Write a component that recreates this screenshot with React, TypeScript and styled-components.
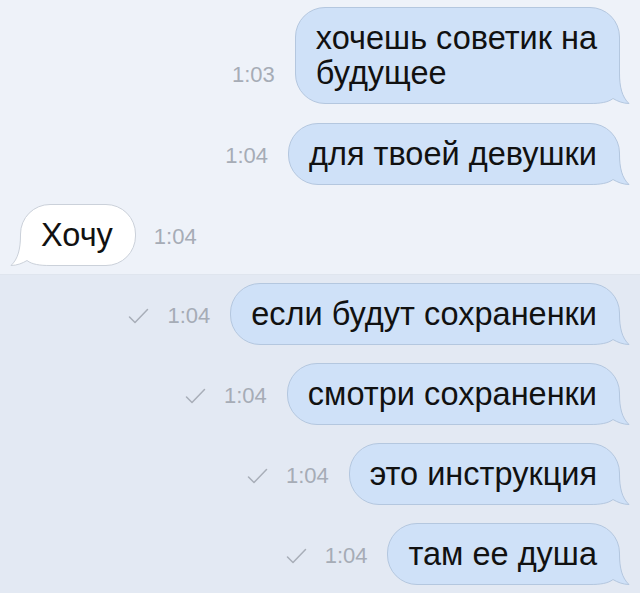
import styled, { createGlobalStyle } from "styled-components";

const GlobalStyle = createGlobalStyle`
  html, body {
    margin: 0;
    padding: 0;
    background: #eef2f9;
  }
  body {
    font-family: "Liberation Sans", Arial, sans-serif;
    -webkit-font-smoothing: antialiased;
  }
`;

const Screen = styled.div`
  width: 640px;
  height: 593px;
  overflow: hidden;
  display: flex;
  flex-direction: column;
  background: #e3e9f3;
`;

const ReadArea = styled.div`
  display: flex;
  flex-direction: column;
  gap: 19px;
  padding: 7px 0 8px;
  background: #eef2f9;
  border-bottom: 1px solid #dfe5ee;
`;

const UnreadArea = styled.div`
  display: flex;
  flex-direction: column;
  gap: 18px;
  padding: 8px 0 0;
`;

const Row = styled.div<{ $out?: boolean }>`
  display: flex;
  align-items: flex-end;
  justify-content: ${(p) => (p.$out ? "flex-end" : "flex-start")};
  padding: ${(p) => (p.$out ? "0 20px 0 0" : "0 0 0 20px")};
`;

const Meta = styled.div<{ $out?: boolean }>`
  display: flex;
  align-items: center;
  gap: 18px;
  height: 58px;
  margin: ${(p) => (p.$out ? "0 20px 0 0" : "0 0 0 18px")};
  font-size: 22px;
  color: #a6acb6;
`;

const Bubble = styled.div<{ $out?: boolean }>`
  position: relative;
  padding: 13px 22px 12px 20px;
  line-height: 35px;
  font-size: 32.5px;
  color: #111;
  border-radius: 30px;
  background: ${(p) => (p.$out ? "#cfe1f8" : "#ffffff")};
  border: 1px solid ${(p) => (p.$out ? "#b4c7df" : "#cbd1da")};
`;

const Text = styled.span`
  position: relative;
  z-index: 1;
`;

const Tail = styled.svg<{ $out?: boolean }>`
  position: absolute;
  bottom: -1px;
  width: 40px;
  height: 31px;
  ${(p) => (p.$out ? "right: -11px;" : "left: -11px; transform: scaleX(-1);")}
`;

function BubbleTail({ out }: { out?: boolean }) {
  const fill = out ? "#cfe1f8" : "#ffffff";
  const stroke = out ? "#b4c7df" : "#cbd1da";
  return (
    <Tail $out={out} viewBox="0 0 40 31">
      <path
        d="M0 30.5 L0 0 L29.5 0 C29.5 14 32 24 39 30.5 C33 30.5 27 28 23 25.5 C18 29.5 10 30.5 0 30.5 Z"
        fill={fill}
      />
      <path
        d="M29.5 0 C29.5 14 32 24 39 30.5 C33 30.5 27 28 23 25.5 C18 29.5 10 30.5 0 30.5"
        fill="none"
        stroke={stroke}
        strokeWidth="1"
      />
    </Tail>
  );
}

const Check = () => (
  <svg width="21" height="16" viewBox="0 0 21 16">
    <path
      d="M1.5 9 L7 14.5 L19.5 1.5"
      fill="none"
      stroke="#a8aeb8"
      strokeWidth="1.5"
      strokeLinecap="round"
      strokeLinejoin="round"
    />
  </svg>
);

type Msg = { text: React.ReactNode; time: string; out?: boolean; sent?: boolean };

function Message({ text, time, out, sent }: Msg) {
  const meta = (
    <Meta $out={out}>
      {sent && <Check />}
      <span>{time}</span>
    </Meta>
  );
  return (
    <Row $out={out}>
      {out && meta}
      <Bubble $out={out}>
        <Text>{text}</Text>
        <BubbleTail out={out} />
      </Bubble>
      {!out && meta}
    </Row>
  );
}

export default function App() {
  return (
    <>
      <GlobalStyle />
      <Screen>
        <ReadArea>
          <Message
            out
            time="1:03"
            text={
              <>
                хочешь советик на
                <br />
                будущее
              </>
            }
          />
          <Message out time="1:04" text="для твоей девушки" />
          <Message time="1:04" text="Хочу" />
        </ReadArea>
        <UnreadArea>
          <Message out sent time="1:04" text="если будут сохраненки" />
          <Message out sent time="1:04" text="смотри сохраненки" />
          <Message out sent time="1:04" text="это инструкция" />
          <Message out sent time="1:04" text="там ее душа" />
        </UnreadArea>
      </Screen>
    </>
  );
}
